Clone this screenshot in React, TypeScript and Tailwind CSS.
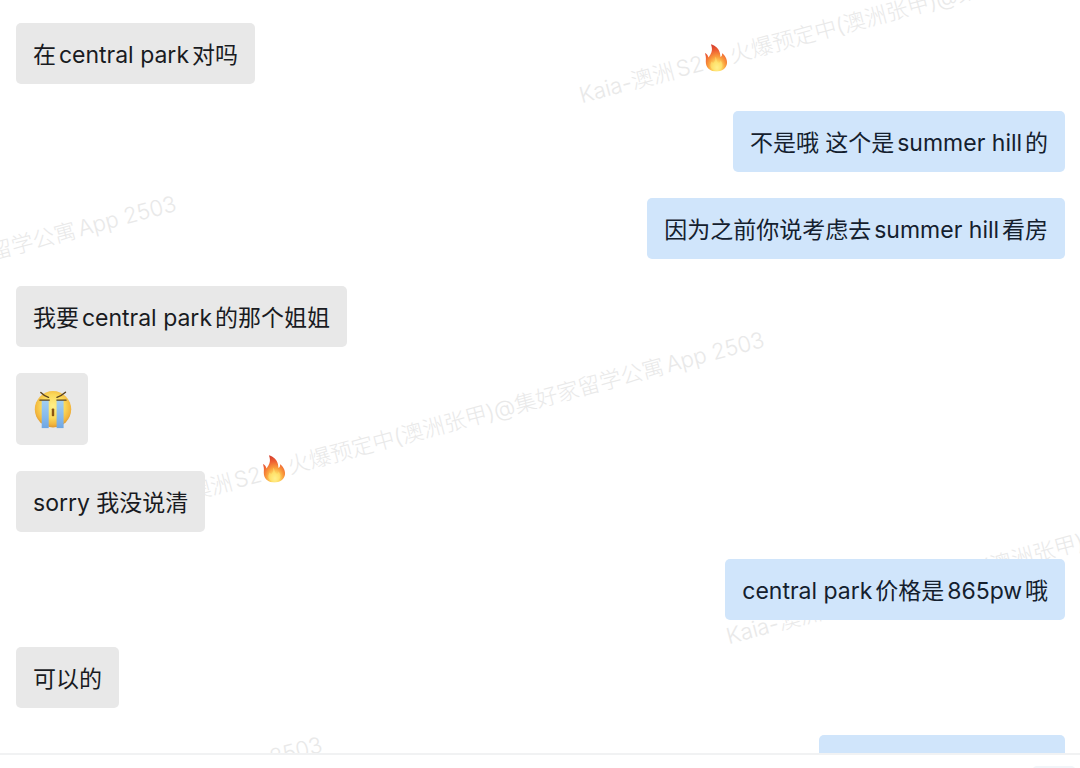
import React from "react";

type Side = "in" | "out";

type Turn = {
  side: Side;
  messages: string[];
};

const CRYING = "[crying]";

const turns: Turn[] = [
  { side: "in", messages: ["在central park对吗"] },
  {
    side: "out",
    messages: ["不是哦 这个是summer hill的", "因为之前你说考虑去summer hill看房"],
  },
  {
    side: "in",
    messages: ["我要central park的那个姐姐", CRYING, "sorry 我没说清"],
  },
  { side: "out", messages: ["central park价格是865pw哦"] },
  { side: "in", messages: ["可以的"] },
  { side: "out", messages: [""] },
];

const watermarkSpots = [
  { left: 583, top: 80 },
  { left: 141, top: 491 },
  { left: 730, top: 621 },
  { left: -447, top: 355 },
  { left: -301, top: 896 },
];

function CryingFace() {
  return (
    <svg viewBox="0 0 40 40" className="size-10" role="img" aria-label="大哭">
      <defs>
        <radialGradient id="face" cx="50%" cy="42%" r="58%">
          <stop offset="0" stopColor="#fff08a" />
          <stop offset="0.55" stopColor="#fbd95a" />
          <stop offset="0.85" stopColor="#f2b53c" />
          <stop offset="1" stopColor="#dc962f" />
        </radialGradient>
        <linearGradient id="tear" x1="0" y1="0" x2="0" y2="1">
          <stop offset="0" stopColor="#a3d0f3" />
          <stop offset="0.6" stopColor="#85b9ec" />
          <stop offset="1" stopColor="#6fa6e2" />
        </linearGradient>
      </defs>
      <circle cx="21" cy="20.3" r="18.2" fill="url(#face)" />
      <rect x="9.7" y="11.1" width="7" height="28" fill="url(#tear)" />
      <rect x="24.6" y="11.1" width="7" height="28" fill="url(#tear)" />
      <g stroke="#5b4320" strokeWidth="1.4" strokeLinecap="round" fill="none">
        <path d="M7.9 11.1H17.3M24.9 11.1H34.1" />
        <path d="M8.8 3.5Q12 6.8 16.5 8.4M33.5 3.3Q29.5 6.8 25 8.4" />
      </g>
      <rect x="19.8" y="19.5" width="2.4" height="7.8" rx="0.8" fill="#8a5514" />
    </svg>
  );
}

function Flame({ id }: { id: string }) {
  return (
    <svg viewBox="0 0 24 28" className="mx-0.5 inline-block h-7 w-6 rotate-12 align-[-5px]">
      <defs>
        <radialGradient id={id} cx="52%" cy="86%" r="80%">
          <stop offset="0" stopColor="#fff6a0" />
          <stop offset="0.25" stopColor="#fedb62" />
          <stop offset="0.5" stopColor="#fa9d3c" />
          <stop offset="0.78" stopColor="#ee6033" />
          <stop offset="1" stopColor="#d9442f" />
        </radialGradient>
      </defs>
      <path
        fill={`url(#${id})`}
        d="M7 0.3C11.5 1.5 15 5.6 15.6 9.4C15.9 11.2 15.8 12.6 16.1 13.4C17.4 12.9 17.9 11.4 17.7 9.8C20.6 12 22.7 16 22.2 19.8C21.6 24.6 17.3 27.7 11.8 27.7C6 27.7 1.5 24.4 1.1 19.2C0.9 16.2 1.6 14.6 1.3 12.2C1.2 10.9 0.8 9.8 0.7 8.8C2.5 9.7 3.6 11.4 4 13.3C5.2 11.6 7.4 8.9 7.8 6C8 3.8 7.6 2 7 0.3Z"
      />
      <path
        fill="#ffe978"
        fillOpacity="0.5"
        d="M10.6 12.6C12.6 15 11.8 17.8 14 19.4C15.2 18.9 15.6 18 15.8 17C17.8 19.4 18.2 22.4 16.4 24.6C13.6 27.2 8.6 27 6.4 24.4C4.6 21.8 5.6 19.4 7 17.4C7.6 18.2 8 18.8 8.6 19C10.6 17.4 10.9 15 10.6 12.6Z"
      />
    </svg>
  );
}

function Watermark() {
  return (
    <div
      aria-hidden="true"
      className="pointer-events-none absolute inset-0 overflow-hidden"
    >
      {watermarkSpots.map((spot, i) => (
        <p
          key={i}
          className="absolute origin-bottom-left -rotate-15 text-[22px] leading-6 font-light whitespace-nowrap text-[#e9e9e9] [text-autospace:normal]"
          style={spot}
        >
          Kaia-澳洲S2
          <Flame id={`flame-${i}`} />
          火爆预定中(澳洲张甲)@集好家留学公寓App 2503
        </p>
      ))}
    </div>
  );
}

function Bubble({ side, text }: { side: Side; text: string }) {
  const tone =
    side === "in" ? "bg-[#e8e8e8] text-[#191b1f]" : "bg-[#d0e5fb] text-[#14202e]";
  if (text === CRYING) {
    return (
      <li className={`rounded-[5px] p-4 ${tone}`}>
        <CryingFace />
      </li>
    );
  }
  return (
    <li
      className={`min-h-[61px] rounded-[5px] px-[17px] pt-[18px] pb-[14px] text-[23px] leading-[29px] [text-autospace:normal] ${tone} ${
        text ? "" : "w-[246px]"
      }`}
    >
      {text}
    </li>
  );
}

export default function App() {
  return (
    <div className="flex h-screen flex-col bg-white font-['Inter','Noto_Sans_CJK_SC',sans-serif]">
      <main className="relative min-h-0 flex-1 overflow-hidden">
        <Watermark />
        <div className="relative flex flex-col gap-[27px] pt-[23px] pr-[15px] pl-4">
          {turns.map((turn, i) => (
            <ul
              key={i}
              className={`flex flex-col gap-[26px] ${
                turn.side === "in" ? "items-start" : "items-end"
              }`}
            >
              {turn.messages.map((text, j) => (
                <Bubble key={j} side={turn.side} text={text} />
              ))}
            </ul>
          ))}
        </div>
      </main>
      <footer className="flex h-[15px] shrink-0 justify-end overflow-hidden border-t-2 border-[#f1f2f3] bg-white pt-[11px] pr-1">
        <button
          type="button"
          aria-label="发送"
          className="h-8 w-11 shrink-0 rounded-[5px] bg-[#f1f5f9]"
        />
      </footer>
    </div>
  );
}
